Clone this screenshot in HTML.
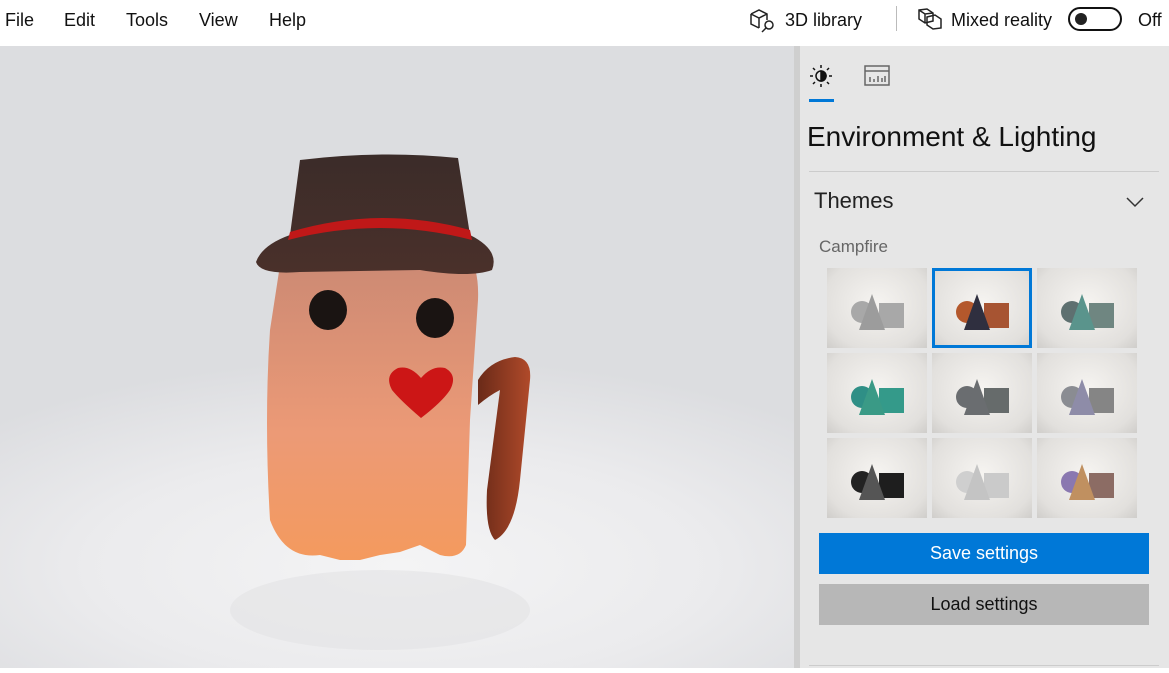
<!DOCTYPE html>
<html><head><style>
*{margin:0;padding:0;box-sizing:border-box}
body{width:1169px;height:668px;overflow:hidden;font-family:"Liberation Sans",sans-serif;background:#fff;position:relative}
.top{position:absolute;left:0;top:0;width:1169px;height:46px;background:#fff;font-size:18px;color:#111}
.top span{position:absolute;top:10px}
.vp{position:absolute;left:0;top:46px;width:794px;height:622px;background:radial-gradient(ellipse 700px 260px at 400px 520px,#f4f4f5 0%,#ebebed 45%,#dcdde0 80%),#dcdde0}
.panel{position:absolute;left:794px;top:46px;width:375px;height:622px;background:#e6e6e6;border-left:6px solid #cfcfcf}
.t{position:absolute;color:#111}
.grid{position:absolute;left:827px;top:268px}
.cell{position:absolute;width:100px;height:80px;background:radial-gradient(ellipse at 50% 45%,#f6f4f1,#e2e0dd 75%,#cfcdca)}
.btn{position:absolute;left:819px;width:330px;height:41px;text-align:center;line-height:41px;font-size:18px}
</style></head><body>
<div class="top">
<span style="left:5px">File</span><span style="left:64px">Edit</span><span style="left:126px">Tools</span><span style="left:199px">View</span><span style="left:269px">Help</span>
<svg style="position:absolute;left:749px;top:8px" width="28" height="26" viewBox="0 0 28 26" fill="none" stroke="#222" stroke-width="1.5"><path d="M2 6 L10 2 L18 6 L18 12 M2 6 L2 16 L10 20 M2 6 L10 10 L18 6 M10 10 L10 20"/><circle cx="20" cy="17" r="4"/><path d="M17 20 L13 24"/></svg>
<span style="left:785px">3D library</span>
<div style="position:absolute;left:896px;top:6px;width:1px;height:25px;background:#bbb"></div>
<svg style="position:absolute;left:917px;top:7px" width="26" height="24" viewBox="0 0 26 24" fill="none" stroke="#222" stroke-width="1.5"><path d="M2 3 L10 2 L16 6 L16 14 L8 16 L2 12 Z M8 7 L8 16 M2 3 L8 7 L16 6"/><path d="M10 10 L18 8 L24 12 L24 21 L16 22 L10 18 Z"/></svg>
<span style="left:951px">Mixed reality</span>
<div style="position:absolute;left:1068px;top:7px;width:54px;height:24px;border:2px solid #111;border-radius:12px"><div style="position:absolute;left:5px;top:4px;width:12px;height:12px;border-radius:6px;background:#222"></div></div>
<span style="left:1138px">Off</span>
</div>
<div class="vp">
<svg width="794" height="622" viewBox="0 46 794 622">
<defs>
<linearGradient id="body" x1="0" y1="0" x2="0" y2="1"><stop offset="0" stop-color="#c98874"/><stop offset=".6" stop-color="#ec9a76"/><stop offset="1" stop-color="#f49a5e"/></linearGradient>
<linearGradient id="hat" x1="0" y1="0" x2="0" y2="1"><stop offset="0" stop-color="#3b2c29"/><stop offset="1" stop-color="#4a302a"/></linearGradient>
<linearGradient id="cane" x1="0" y1="0" x2="1" y2="0"><stop offset="0" stop-color="#6a2a18"/><stop offset="1" stop-color="#b04a2a"/></linearGradient>
</defs>
<ellipse cx="380" cy="610" rx="150" ry="40" fill="#e2e2e4" opacity=".6"/>
<path d="M280 265 Q280 250 300 245 L450 245 Q480 250 478 300 L470 420 L466 545 Q460 560 440 555 L420 545 L400 552 L380 555 L360 560 L340 560 L320 555 Q285 560 270 520 Q264 420 270 330 Z" fill="url(#body)"/>
<path d="M478 380 Q490 360 515 357 Q532 358 530 380 L520 480 Q515 530 495 540 Q485 530 487 490 L500 390 Q490 395 478 405 Z" fill="url(#cane)"/>
<path d="M300 160 Q380 150 458 158 L470 235 Q500 250 492 270 Q470 278 420 270 L300 272 Q260 275 256 262 Q262 245 290 235 Z" fill="url(#hat)"/>
<path d="M290 232 Q380 205 470 230 L472 240 Q380 216 288 240 Z" fill="#c01818"/>
<ellipse cx="328" cy="310" rx="19" ry="20" fill="#1a1412"/>
<ellipse cx="435" cy="318" rx="19" ry="20" fill="#1a1412"/>
<path d="M421 418 Q400 400 392 390 Q384 375 398 368 Q410 365 421 378 Q432 365 445 368 Q458 375 450 390 Q442 402 421 418 Z" fill="#cc1616"/>
</svg>
</div>
<div class="panel"></div>
<svg style="position:absolute;left:809px;top:64px" width="24" height="24" viewBox="0 0 24 24" stroke="#111" stroke-width="1.5" fill="none"><circle cx="12" cy="12" r="5"/><path d="M12 7 A5 5 0 0 1 12 17 Z" fill="#111"/><path d="M12 1v3M12 20v3M1 12h3M20 12h3M4 4l2 2M18 18l2 2M4 20l2-2M18 6l2-2"/></svg>
<div style="position:absolute;left:809px;top:99px;width:25px;height:3px;background:#0078d7"></div>
<svg style="position:absolute;left:864px;top:65px" width="26" height="22" viewBox="0 0 26 22" fill="none" stroke="#666" stroke-width="1.5"><rect x="1" y="1" width="24" height="19"/><path d="M1 6h24M6 17v-5M10 17v-3M14 17v-6M18 17v-4M21 17v-6"/></svg>
<div class="t" style="left:807px;top:121px;font-size:28px">Environment &amp; Lighting</div>
<div style="position:absolute;left:809px;top:171px;width:350px;height:1px;background:#ccc"></div>
<div class="t" style="left:814px;top:188px;font-size:22px;color:#222">Themes</div>
<svg style="position:absolute;left:1126px;top:196px" width="18" height="12" viewBox="0 0 18 12" fill="none" stroke="#333" stroke-width="1.5"><path d="M1 2 L9 10 L17 2"/></svg>
<div class="t" style="left:819px;top:237px;font-size:17px;color:#666">Campfire</div>
<div class="grid">
<div class="cell" style="left:0;top:0"></div>
<div class="cell" style="left:105px;top:0;outline:3px solid #0078d7;outline-offset:-3px"></div>
<div class="cell" style="left:210px;top:0"></div>
<div class="cell" style="left:0;top:85px"></div>
<div class="cell" style="left:105px;top:85px"></div>
<div class="cell" style="left:210px;top:85px"></div>
<div class="cell" style="left:0;top:170px"></div>
<div class="cell" style="left:105px;top:170px"></div>
<div class="cell" style="left:210px;top:170px"></div>
<svg style="position:absolute;left:0;top:0" width="310" height="250">
<defs>
<g id="sh"><circle cx="35" cy="44" r="11"/><rect x="52" y="35" width="25" height="25"/></g>
</defs>
<g fill="#a8a8a8"><circle cx="35" cy="44" r="11"/><rect x="52" y="35" width="25" height="25"/></g><path d="M32 62 L45 26 L58 62 Z" fill="#9c9c9c"/>
<g fill="#b4582c" transform="translate(105 0)"><circle cx="35" cy="44" r="11"/><rect x="52" y="35" width="25" height="25" fill="#a75432"/></g><path d="M137 62 L150 26 L163 62 Z" fill="#2f2f3f"/>
<g fill="#5e7070" transform="translate(210 0)"><circle cx="35" cy="44" r="11"/><rect x="52" y="35" width="25" height="25" fill="#6f8681"/></g><path d="M242 62 L255 26 L268 62 Z" fill="#5a948c"/>
<g fill="#2f8f86" transform="translate(0 85)"><circle cx="35" cy="44" r="11"/><rect x="52" y="35" width="25" height="25" fill="#349a8a"/></g><path d="M32 147 L45 111 L58 147 Z" fill="#3a9a86"/>
<g fill="#6a6d70" transform="translate(105 85)"><circle cx="35" cy="44" r="11"/><rect x="52" y="35" width="25" height="25" fill="#666b6b"/></g><path d="M137 147 L150 111 L163 147 Z" fill="#6a6d70"/>
<g fill="#8a8c92" transform="translate(210 85)"><circle cx="35" cy="44" r="11"/><rect x="52" y="35" width="25" height="25" fill="#858585"/></g><path d="M242 147 L255 111 L268 147 Z" fill="#8e8ca8"/>
<g fill="#222" transform="translate(0 170)"><circle cx="35" cy="44" r="11"/><rect x="52" y="35" width="25" height="25" fill="#1e1e1e"/></g><path d="M32 232 L45 196 L58 232 Z" fill="#555"/>
<g fill="#cfcfcf" transform="translate(105 170)"><circle cx="35" cy="44" r="11"/><rect x="52" y="35" width="25" height="25" fill="#cacaca"/></g><path d="M137 232 L150 196 L163 232 Z" fill="#c4c4c4"/>
<g fill="#8a78b0" transform="translate(210 170)"><circle cx="35" cy="44" r="11"/><rect x="52" y="35" width="25" height="25" fill="#8c6c64"/></g><path d="M242 232 L255 196 L268 232 Z" fill="#c09060"/>
</svg>
</div>
<div class="btn" style="top:533px;background:#0078d7;color:#fff">Save settings</div>
<div class="btn" style="top:584px;background:#b7b7b7;color:#111">Load settings</div>
<div style="position:absolute;left:809px;top:665px;width:350px;height:1px;background:#ccc"></div>
</body></html>
